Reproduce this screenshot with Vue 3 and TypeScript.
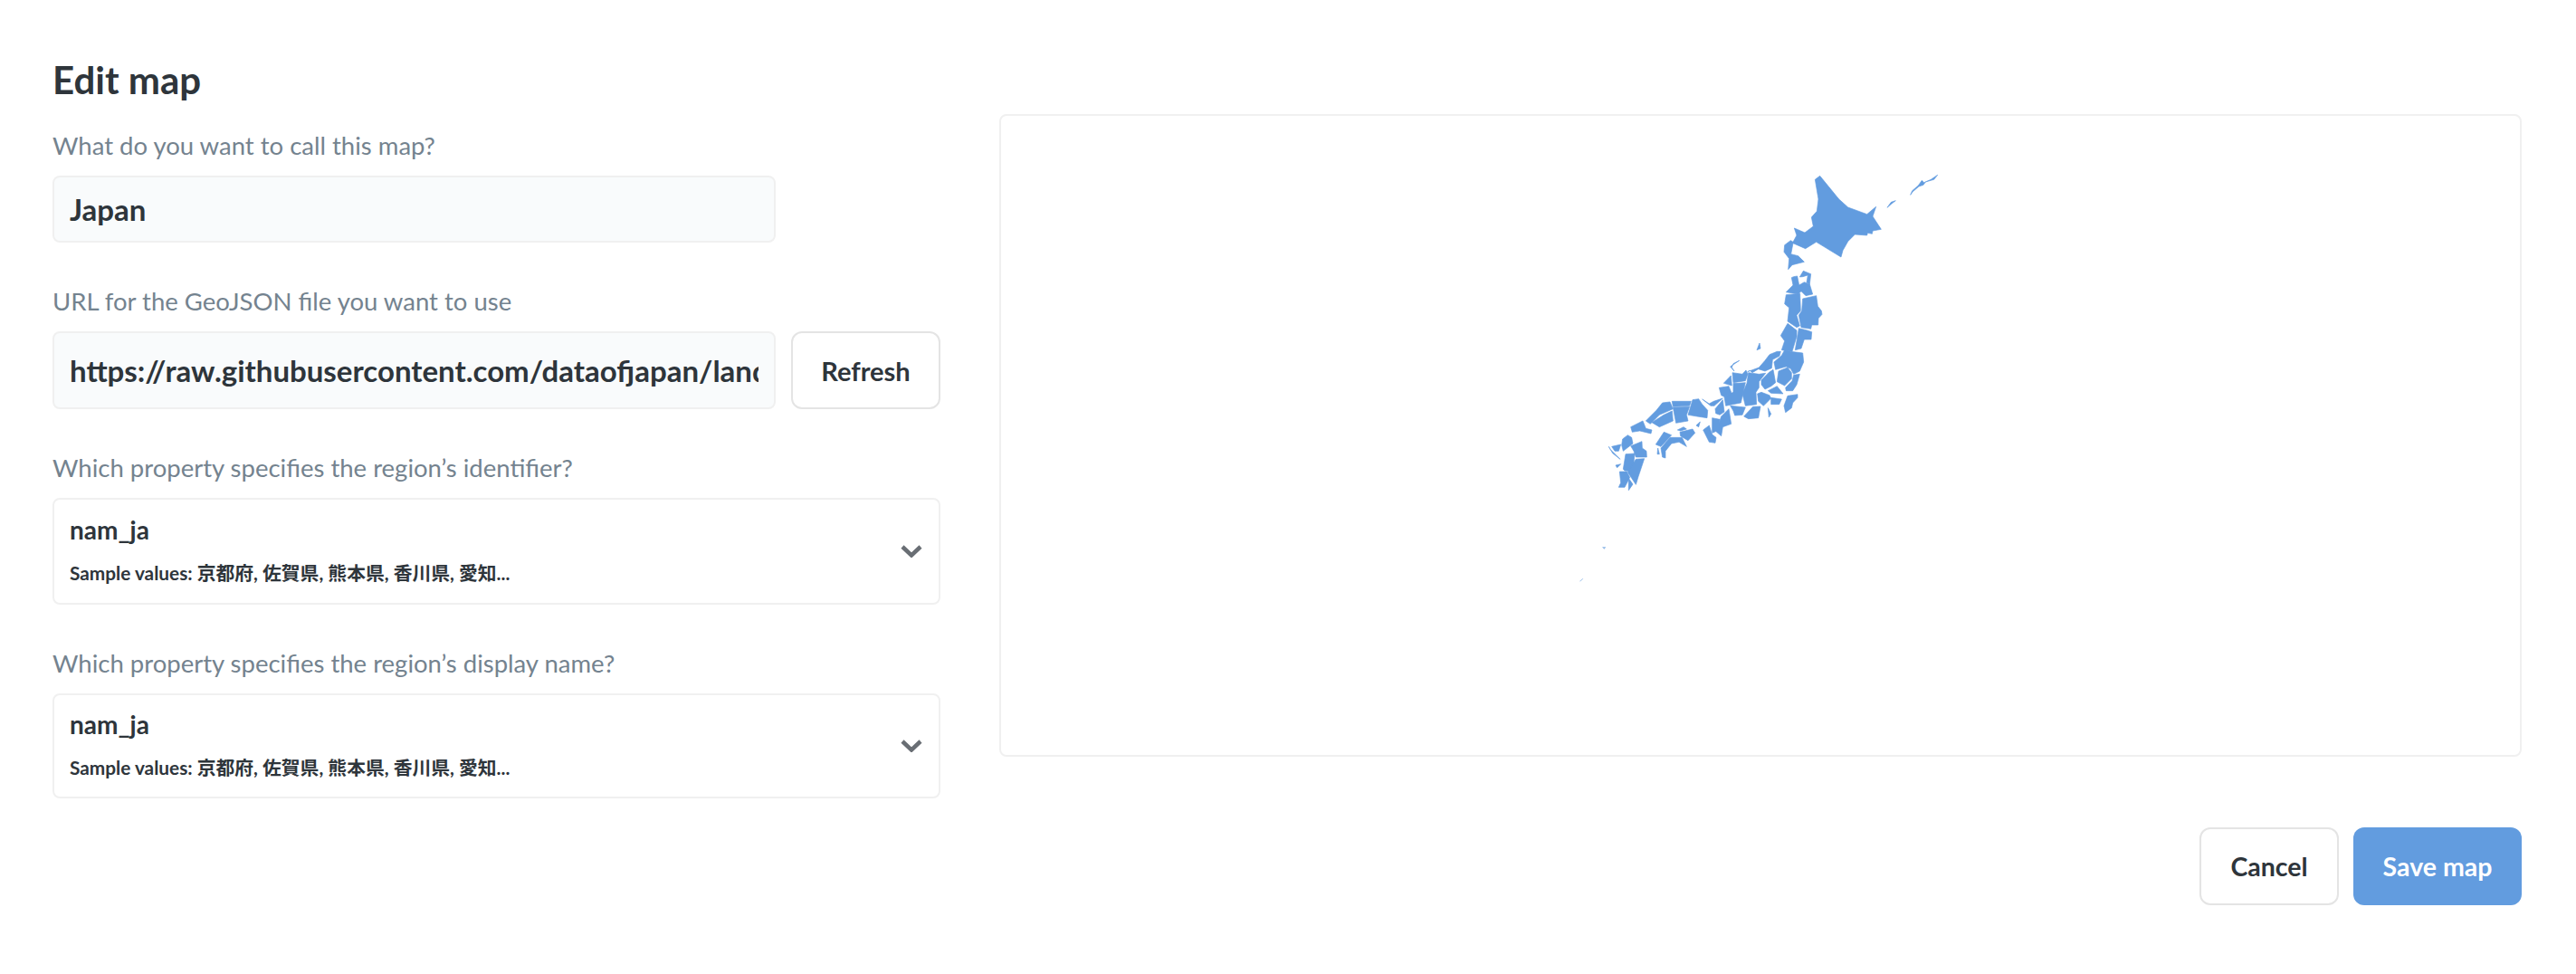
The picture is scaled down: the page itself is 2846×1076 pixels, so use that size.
<script setup lang="ts">
const url = 'https://raw.githubusercontent.com/dataofjapan/land/master/japan.geojson'
const sample = 'Sample values: 京都府, 佐賀県, 熊本県, 香川県, 愛知...'

const north: string[] = [
  '856,85 872,73 935,150 965,177 1028,200 1058,175 1047,207 1075,250 1047,255 1045,265 1030,262 1028,270 988,267 965,290 948,320 942,342 860,292 824,314 783,296 776,332 800,338 820,358 780,368 767,383 770,347 753,325 755,302 775,287 783,292 795,270 787,246 822,261 850,240 844,210 862,190 867,150',
  '1262,70 1240,85 1217,95 1210,88 1198,105 1178,122 1172,136 1180,125 1200,108 1215,103 1222,93 1250,85',
  '1123,155 1108,160 1095,178 1110,165',
  '817,388 842,398 838,432 828,426 832,402 815,407 805,408',
  '785,407 797,405 803,435 820,425 838,432 848,465 825,470 810,455 800,465 760,458 783,435 778,410',
  '760,467 806,463 808,520 795,535 805,570 795,575 765,555 770,510 755,497',
  '815,480 860,470 865,505 877,520 879,532 867,545 866,567 845,567 842,580 810,575 802,535 812,520',
  '765,562 795,585 795,605 780,655 745,650 755,620 742,602',
  '802,578 830,585 845,590 843,615 820,615 810,645 790,650',
  '663,650 672,627 675,645'
]

const central: string[] = [
  '212,92 250,78 270,55 285,35 310,25 322,25 318,40 295,52 292,80 270,90 248,83 228,95 220,88',
  '300,60 325,38 335,20 355,25 395,30 398,60 385,90 365,100 355,82 340,75 305,85',
  '315,90 345,78 358,95 358,115 335,138 310,125',
  '258,120 282,95 297,85 305,128 290,140 270,150 258,135',
  '385,100 375,135 362,155 340,155 338,145 360,122 365,103',
  '345,172 378,167 378,178 362,195 358,212 338,227 333,205',
  '280,155 310,140 330,165 290,163',
  '290,178 325,183 317,200 290,200',
  '245,165 258,160 285,170 290,180 265,205 248,190',
  '280,212 290,232 283,243',
  '215,95 250,100 272,97 250,125 250,145 240,160 242,200 205,205 195,165 210,130',
  '200,240 230,208 255,207 248,245 215,248',
  '155,205 205,210 195,235 170,237 165,222',
  '180,130 205,128 190,195 140,205 135,175 165,160 165,130',
  '162,95 195,100 207,87 213,100 205,122 165,128',
  '133,130 157,105 160,138',
  '118,145 150,140 160,165 135,175 125,170',
  '155,75 185,55 165,65 160,78 168,90',
  '105,215 130,185 135,225 120,235 107,230',
  '62,183 85,198 100,190 130,180 102,205 90,205',
  '125,240 150,215 158,265 130,275 125,305 108,290',
  '95,245 120,250 118,285 95,295',
  '65,285 85,270 95,300 108,310 105,328 85,325'
]

const south: string[] = [
  '450,155 470,152 482,170 500,190 498,215 465,210 435,205',
  '385,180 440,178 430,205 435,225 395,232',
  '382,160 445,160 440,175 385,178',
  '315,230 355,205 382,192 385,225 340,245',
  '295,225 330,190 350,165 375,162 385,185 340,205 310,235',
  '245,245 285,225 295,250 315,255 312,267 275,258 250,262',
  '400,255 420,245 430,252 410,258',
  '408,262 450,252 458,265 435,290 410,275',
  '355,262 380,272 345,310 328,303',
  '345,315 375,280 415,280 430,310 405,295 380,300 360,325 360,348 350,345',
  '335,315 340,335 333,335',
  '462,240 475,228 470,245',
  '218,285 235,272 248,280 252,300 220,325 215,305',
  '182,310 212,303 205,325 192,325',
  '245,308 282,293 283,315 297,325 298,345 262,345 255,325',
  '228,335 258,333 255,365 245,392 225,390 220,385',
  '262,352 290,350 270,410 262,436 235,395',
  '208,393 232,393 242,412 225,445 205,445 212,430',
  '238,415 252,435 238,455',
  '172,310 178,320 210,352 185,332',
  '195,372 212,368 200,380'
]

const tiny: string[] = [
  '150,643 163,643 157,650',
  '75,757 85,748 88,748 78,757'
]
</script>

<template>
  <div class="page">
    <div class="content">
      <div class="form">
        <h2 class="title">Edit map</h2>
        <div class="field name-field">
          <div class="label">What do you want to call this map?</div>
          <div class="input short">Japan</div>
        </div>
        <div class="field url-field">
          <div class="label">URL for the GeoJSON file you want to use</div>
          <div class="url-row">
            <div class="input url"><span class="clip">{{ url }}</span></div>
            <button class="btn refresh">Refresh</button>
          </div>
        </div>
        <div class="field select-field">
          <div class="label">Which property specifies the region’s identifier?</div>
          <div class="select">
            <div>
              <div class="select-name">nam_ja</div>
              <div class="select-sample">{{ sample }}</div>
            </div>
            <svg class="chevron" viewBox="0 0 24 14"><path d="M2 2 L12 11.5 L22 2" /></svg>
          </div>
        </div>
        <div class="field select-field second">
          <div class="label">Which property specifies the region’s display name?</div>
          <div class="select">
            <div>
              <div class="select-name">nam_ja</div>
              <div class="select-sample">{{ sample }}</div>
            </div>
            <svg class="chevron" viewBox="0 0 24 14"><path d="M2 2 L12 11.5 L22 2" /></svg>
          </div>
        </div>
      </div>
      <div class="map-card">
        <svg class="map" viewBox="1106 128 1678 706" preserveAspectRatio="none">
          <g transform="translate(1720 170) scale(0.33333)" class="land">
            <polygon v-for="(p, i) in north" :key="i" :points="p" />
          </g>
          <g transform="translate(1860 380) scale(0.33333)" class="land">
            <polygon v-for="(p, i) in central" :key="i" :points="p" />
          </g>
          <g transform="translate(1720 390) scale(0.33333)" class="land">
            <polygon v-for="(p, i) in south" :key="i" :points="p" />
          </g>
          <g transform="translate(1720 390) scale(0.33333)" class="islet">
            <polygon v-for="(p, i) in tiny" :key="i" :points="p" />
          </g>
        </svg>
      </div>
    </div>
    <div class="footer">
      <button class="btn cancel">Cancel</button>
      <button class="btn save">Save map</button>
    </div>
  </div>
</template>

<style scoped>
.page {
  box-sizing: border-box;
  width: 2846px;
  height: 1076px;
  padding: 62px 60px 0 58px;
  font-family: Lato, "Noto Sans CJK JP", sans-serif;
  color: #2e353b;
  background: #fff;
}
.content {
  display: flex;
  gap: 65px;
  align-items: flex-start;
}
.form {
  width: 981px;
  flex: none;
}
.title {
  margin: 0;
  font-size: 42px;
  line-height: 52px;
  font-weight: 700;
}
.field {
  display: flex;
  flex-direction: column;
}
.name-field { margin-top: 30px; }
.url-field { margin-top: 48px; }
.select-field { margin-top: 48px; }
.second { margin-top: 48px; }
.label {
  font-size: 27.5px;
  line-height: 34px;
  color: #74838f;
  margin-bottom: 16px;
}
.input {
  box-sizing: border-box;
  width: 799px;
  height: 74px;
  padding: 0 17px;
  display: flex;
  align-items: center;
  border: 2px solid #f0f0f0;
  border-radius: 8px;
  background: #f9fbfc;
  font-size: 33px;
  font-weight: 700;
  white-space: nowrap;
  overflow: hidden;
}
.input.url { height: 86px; }
.clip {
  display: block;
  overflow: hidden;
  flex: 1;
}
.url-row {
  display: flex;
  gap: 17px;
}
.btn {
  box-sizing: border-box;
  font-family: inherit;
  font-weight: 700;
  border-radius: 12px;
  cursor: pointer;
}
.refresh {
  width: 165px;
  height: 86px;
  font-size: 29px;
  color: #2e353b;
  background: #fff;
  border: 2px solid #e4e4e4;
}
.select {
  box-sizing: border-box;
  height: 118px;
  padding: 0 18px 0 17px;
  display: flex;
  align-items: center;
  justify-content: space-between;
  border: 2px solid #f0f0f0;
  border-radius: 8px;
  background: #fff;
}
.second .select { height: 116px; }
.select > div {
  position: relative;
  top: -2px;
}
.select-name {
  font-size: 28px;
  line-height: 32px;
  font-weight: 700;
}
.select-sample {
  margin-top: 19px;
  font-size: 20.8px;
  line-height: 26px;
  font-weight: 700;
}
.chevron {
  width: 24px;
  height: 14px;
  fill: none;
  stroke: #696e74;
  stroke-width: 4.5;
}
.map-card {
  box-sizing: border-box;
  width: 1682px;
  height: 710px;
  margin-top: 64px;
  border: 2px solid #f0f0f0;
  border-radius: 8px;
  overflow: hidden;
}
.map {
  display: block;
  width: 100%;
  height: 100%;
}
.land {
  fill: #629cdf;
  stroke: #629cdf;
  stroke-width: 2;
  stroke-linejoin: round;
}
.islet {
  fill: #629cdf;
  opacity: 0.7;
}
.footer {
  display: flex;
  justify-content: flex-end;
  gap: 16px;
  margin-top: 32px;
}
.cancel {
  width: 154px;
  height: 86px;
  font-size: 28.5px;
  color: #2e353b;
  background: #fff;
  border: 2px solid #e4e4e4;
}
.save {
  width: 186px;
  height: 86px;
  font-size: 28.5px;
  color: #fff;
  background: #629cdf;
  border: none;
}
</style>
